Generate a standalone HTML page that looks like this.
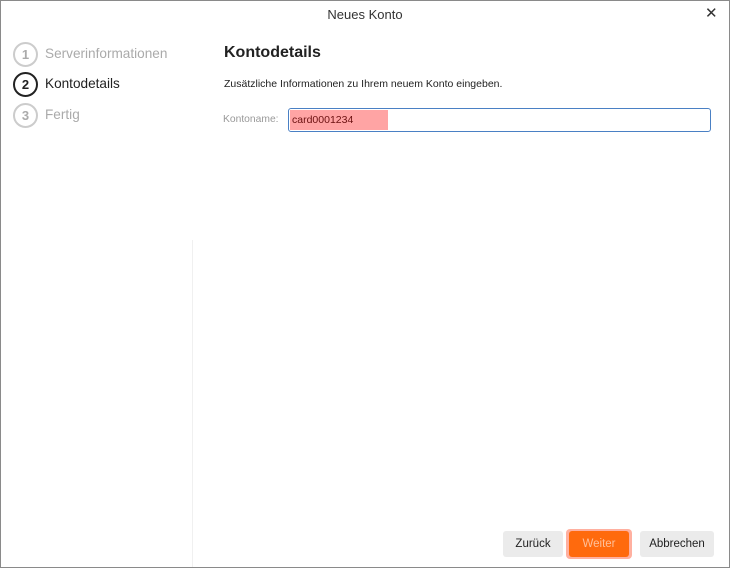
<!DOCTYPE html>
<html><head><meta charset="utf-8"><style>
*{margin:0;padding:0;box-sizing:border-box}
body{width:730px;height:568px;background:#fff;font-family:"Liberation Sans","DejaVu Sans",sans-serif;position:relative;overflow:hidden}
.frame{position:absolute;left:0;top:0;width:730px;height:568px;border:1px solid #8a8a8a}
.t{position:absolute;white-space:nowrap}
.circ{position:absolute;width:25px;height:25px;border-radius:50%;border:2px solid #ccc;color:#aaa;font-size:13px;font-weight:bold;text-align:center;line-height:21px}
.btn{position:absolute;top:531px;height:26px;background:#ebebeb;border-radius:3px;font-size:11.5px;color:#222;text-align:center;line-height:26px;font-weight:500}
</style></head><body>
<div class="frame"></div>
<div class="t" style="left:0;width:730px;text-align:center;top:7px;font-size:13px;color:#333">Neues Konto</div>
<div class="t" style="left:705px;top:4px;font-size:15px;font-weight:bold;color:#333">✕</div>

<div class="circ" style="left:13px;top:42px">1</div>
<div class="t" style="left:45px;top:46px;font-size:13.6px;color:#aaa">Serverinformationen</div>
<div class="circ" style="left:13px;top:72px;border-color:#222;color:#222">2</div>
<div class="t" style="left:45px;top:76px;font-size:13.6px;color:#222">Kontodetails</div>
<div class="circ" style="left:13px;top:103px">3</div>
<div class="t" style="left:45px;top:107px;font-size:13.6px;color:#aaa">Fertig</div>

<div style="position:absolute;left:192px;top:240px;width:1px;height:327px;background:#f0f0f0"></div>

<div class="t" style="left:224px;top:44px;font-size:16px;font-weight:bold;color:#222">Kontodetails</div>
<div class="t" style="left:224px;top:78px;font-size:10.5px;color:#222">Zusätzliche Informationen zu Ihrem neuem Konto eingeben.</div>
<div class="t" style="left:223px;top:114px;font-size:10.3px;color:#999">Kontoname:</div>
<div style="position:absolute;left:288px;top:108px;width:423px;height:24px;border:1px solid #4a80c4;border-radius:3px;background:#fff"></div>
<div style="position:absolute;left:290px;top:110px;width:98px;height:20px;background:#ffa4a4"></div>
<div class="t" style="left:292px;top:114px;font-size:10.5px;color:#6b1010">card0001234</div>

<div class="btn" style="left:503px;width:60px">Zurück</div>
<div style="position:absolute;left:566px;top:529px;width:66px;height:30px;border-radius:4px;background:#ffb0a0"></div>
<div class="btn" style="left:569px;width:60px;background:#ff6a0d;color:#ffc09a">Weiter</div>
<div class="btn" style="left:640px;width:74px">Abbrechen</div>
</body></html>
